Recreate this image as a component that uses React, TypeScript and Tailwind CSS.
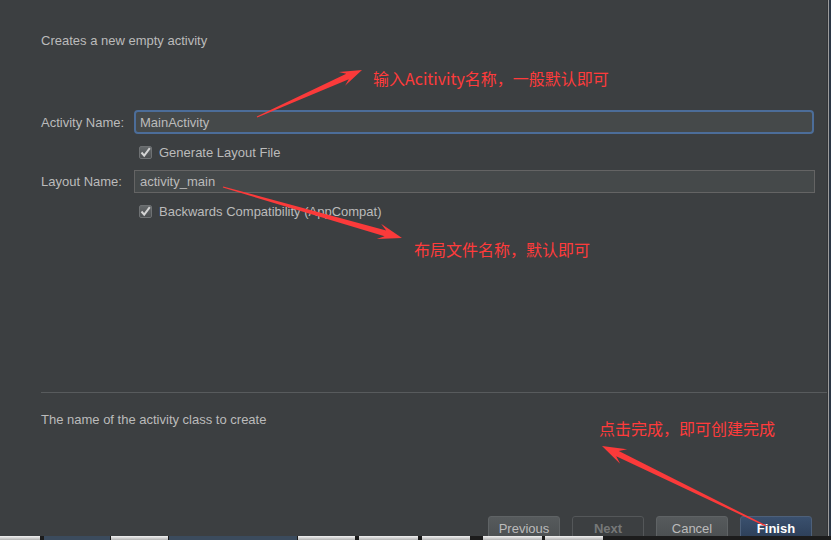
type Pt = [number, number];

// tapered red annotation arrow: thin tail, thick neck, barbed head
function arrowPoints(tail: Pt, tip: Pt, headLen: number, headW: number, neckW: number) {
  const dx = tip[0] - tail[0];
  const dy = tip[1] - tail[1];
  const len = Math.hypot(dx, dy);
  const ux = dx / len;
  const uy = dy / len;
  const nx = -uy;
  const ny = ux;
  const neck: Pt = [tip[0] - ux * headLen * 0.72, tip[1] - uy * headLen * 0.72];
  const barb: Pt = [tip[0] - ux * headLen, tip[1] - uy * headLen];
  const pts: Pt[] = [
    [tail[0] + nx * 0.6, tail[1] + ny * 0.6],
    [neck[0] + (nx * neckW) / 2, neck[1] + (ny * neckW) / 2],
    [barb[0] + (nx * headW) / 2, barb[1] + (ny * headW) / 2],
    tip,
    [barb[0] - (nx * headW) / 2, barb[1] - (ny * headW) / 2],
    [neck[0] - (nx * neckW) / 2, neck[1] - (ny * neckW) / 2],
    [tail[0] - nx * 0.6, tail[1] - ny * 0.6],
  ];
  return pts.map((p) => `${p[0].toFixed(1)},${p[1].toFixed(1)}`).join(" ");
}

const ARROWS: { tail: Pt; tip: Pt; head: number; width: number; neck: number }[] = [
  { tail: [257, 117], tip: [362, 70], head: 22, width: 15, neck: 6 },
  { tail: [223, 187], tip: [402, 238], head: 24, width: 16, neck: 6 },
  { tail: [766, 526], tip: [602, 446], head: 24, width: 16, neck: 6 },
];

const TASKBAR: { w: number; kind: "light" | "dark" | "blue" }[] = [
  { w: 40, kind: "light" },
  { w: 4, kind: "dark" },
  { w: 66, kind: "blue" },
  { w: 1, kind: "dark" },
  { w: 57, kind: "light" },
  { w: 1, kind: "dark" },
  { w: 128, kind: "blue" },
  { w: 1, kind: "dark" },
  { w: 57, kind: "light" },
  { w: 4, kind: "dark" },
  { w: 59, kind: "light" },
  { w: 4, kind: "dark" },
  { w: 48, kind: "light" },
  { w: 13, kind: "dark" },
  { w: 59, kind: "light" },
  { w: 3, kind: "dark" },
  { w: 58, kind: "light" },
];

const SEG_CLASS = {
  light: "bg-gradient-to-b from-[#f2f2f2] to-[#b4b4b4]",
  dark: "bg-[#1c1c1c]",
  blue: "bg-[#3b4b5d]",
};

function Checkbox() {
  return (
    <span className="flex h-[13px] w-[13px] items-center justify-center rounded-[2px] border border-[#6e7173] bg-gradient-to-b from-[#65696b] to-[#4b4e50]">
      <svg width="11" height="11" viewBox="0 0 11 11">
        <path d="M1.5 5.5 L4.2 8.6 L9.8 1.2" fill="none" stroke="#d4d4d4" strokeWidth="2" />
      </svg>
    </span>
  );
}

function WizardButton({ label, variant }: { label: string; variant: "normal" | "disabled" | "default" }) {
  const cls =
    variant === "default"
      ? "border-[#4d607a] bg-gradient-to-b from-[#3a506e] to-[#2c3e57] font-bold text-white"
      : variant === "disabled"
        ? "border-[#545759] bg-[#3c3f41] font-bold text-[#767878]"
        : "border-[#5f6365] bg-gradient-to-b from-[#565a5c] to-[#4b4f51] text-[#bbbbbb]";
  return (
    <div className={`flex h-[25px] w-[72px] items-center justify-center rounded-[3px] border pt-px ${cls}`}>
      {label}
    </div>
  );
}

export default function App() {
  return (
    <div className="relative h-[540px] w-[831px] overflow-hidden bg-[#3c3f41] font-['Liberation_Sans','Noto_Sans_CJK_SC',sans-serif] text-[13px] leading-[16px] text-[#bbbbbb]">
      <div className="flex h-[536px]">
        <div className="flex flex-1 flex-col overflow-hidden">
          <div className="pl-[41px] pt-[33px]">Creates a new empty activity</div>

          {/* Activity name */}
          <div className="mt-[61px] flex items-center pl-[41px] pr-[13px]">
            <span className="w-[93px] pt-[2px]">Activity Name:</span>
            <div className="flex h-[24px] flex-1 items-center rounded-[4px] border-2 border-[#4c6d99] bg-[#45494a] px-[4px] pt-[2px]">
              MainActivity
            </div>
          </div>

          <div className="mt-[10px] flex h-[16px] items-center gap-[7px] pl-[139px]">
            <Checkbox />
            <span className="pt-[2px]">Generate Layout File</span>
          </div>

          {/* Layout name */}
          <div className="mt-[10px] flex items-center pl-[41px] pr-[12px]">
            <span className="w-[93px] pt-px">Layout Name:</span>
            <div className="flex h-[23px] flex-1 items-center border border-[#646464] bg-[#45494a] px-[5px] pt-px">
              activity_main
            </div>
          </div>

          <div className="mt-[10px] flex h-[16px] items-center gap-[7px] pl-[139px]">
            <Checkbox />
            <span className="pt-[2px]">Backwards Compatibility (AppCompat)</span>
          </div>

          <div className="ml-[41px] mt-[173px] h-px shrink-0 bg-[#585b5d]" />

          <div className="mt-[19px] pl-[41px]">The name of the activity class to create</div>

          <div className="mt-[88px] flex justify-end gap-[12px] pr-[15px]">
            <WizardButton label="Previous" variant="normal" />
            <WizardButton label="Next" variant="disabled" />
            <WizardButton label="Cancel" variant="normal" />
            <WizardButton label="Finish" variant="default" />
          </div>
        </div>

        {/* right window edge */}
        <div className="flex w-[4px]">
          <div className="w-px bg-[#333537]" />
          <div className="w-px bg-[#9c9c9c]" />
          <div className="flex-1 bg-[#2b3644]" />
        </div>
      </div>

      {/* taskbar strip */}
      <div className="flex h-[4px] bg-[#1c1c1c]">
        {TASKBAR.map((s, i) => (
          <div key={i} className={`shrink-0 ${SEG_CLASS[s.kind]}`} style={{ width: s.w }} />
        ))}
      </div>

      {/* annotations */}
      <svg className="pointer-events-none absolute left-0 top-0" width="831" height="540">
        {ARROWS.map((a, i) => (
          <polygon key={i} points={arrowPoints(a.tail, a.tip, a.head, a.width, a.neck)} fill="#fb3a3a" />
        ))}
      </svg>
      <div className="absolute left-[373px] top-[69px] font-['Noto_Sans_CJK_SC',sans-serif] text-[16px] leading-[18px] text-[#ff3b3b]">
        输入Acitivity名称，一般默认即可
      </div>
      <div className="absolute left-[414px] top-[240px] font-['Noto_Sans_CJK_SC',sans-serif] text-[16px] leading-[18px] text-[#ff3b3b]">
        布局文件名称，默认即可
      </div>
      <div className="absolute left-[599px] top-[419px] font-['Noto_Sans_CJK_SC',sans-serif] text-[16px] leading-[18px] text-[#ff3b3b]">
        点击完成，即可创建完成
      </div>
    </div>
  );
}
